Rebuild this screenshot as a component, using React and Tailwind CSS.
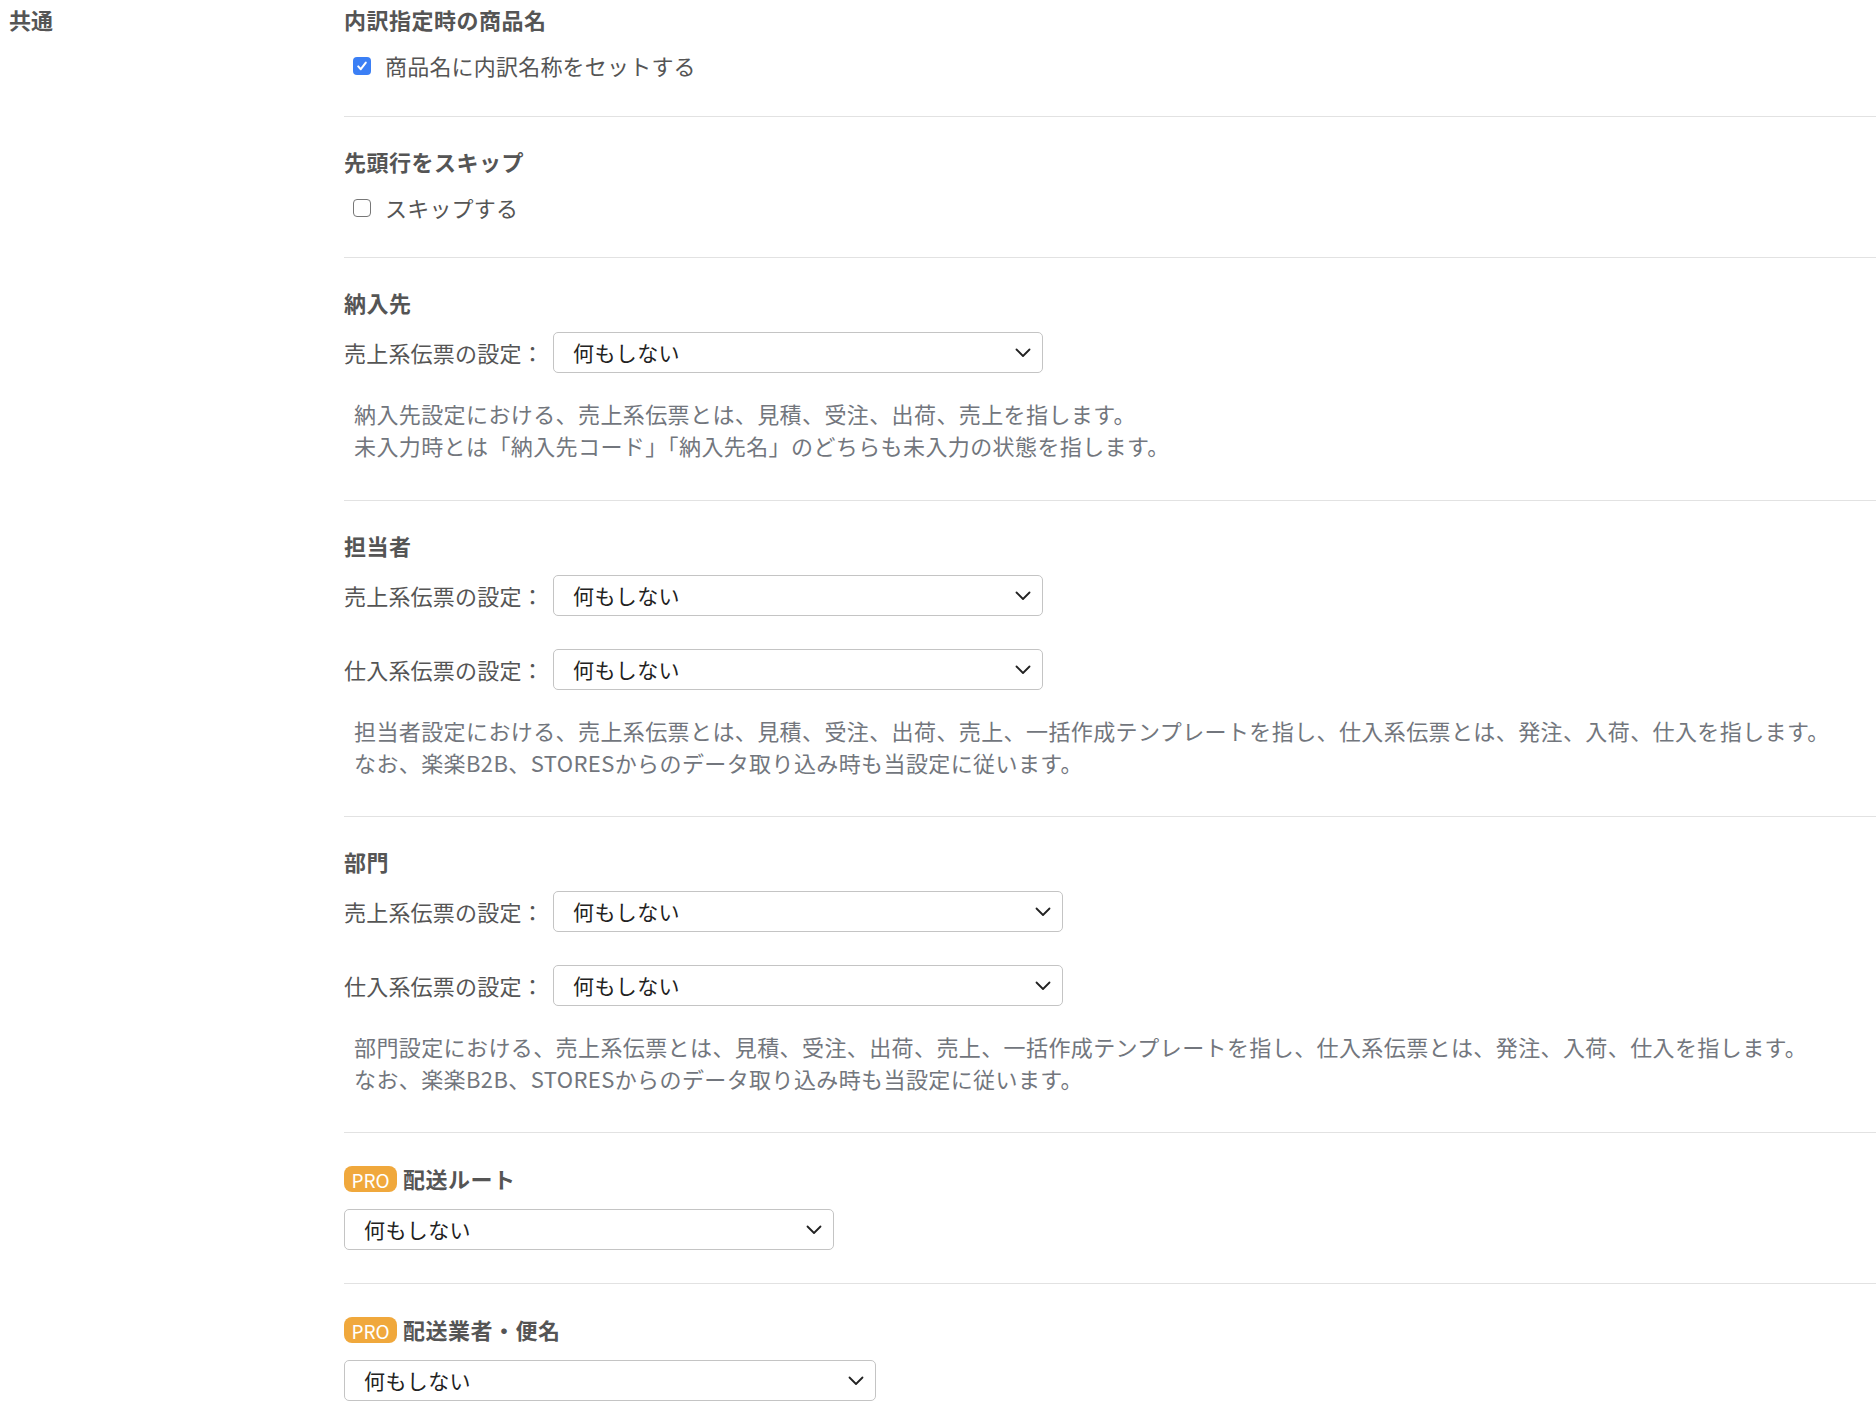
import React from "react";

const FONT = { fontFamily: '"Noto Sans CJK JP", "Noto Sans", sans-serif' };

function Chevron() {
  return (
    <svg width="16" height="10" viewBox="0 0 16 10" fill="none" className="shrink-0">
      <path d="M1.5 1.5 L8 8 L14.5 1.5" stroke="#222" strokeWidth="1.8" strokeLinecap="round" strokeLinejoin="round" />
    </svg>
  );
}

function Select({ w }) {
  return (
    <div
      className={`h-[41px] ${w} flex items-center justify-between pl-[19px] pr-[11px] border border-[#c4c4c4] rounded-[5px] bg-white text-[21px] text-[#222]`}
    >
      <span className="leading-none tracking-[0.4px]">何もしない</span>
      <Chevron />
    </div>
  );
}

function LabeledSelect({ label, w }) {
  return (
    <div className="flex items-center">
      <span className="w-[209px] text-[22px] leading-[33px] text-[#555] tracking-[0.2px]">{label}：</span>
      <Select w={w} />
    </div>
  );
}

function Title({ children, pro }) {
  return (
    <div className={`flex items-center ${pro ? "h-[35px]" : "h-[33px]"} mb-[13px]`}>
      {pro && (
        <span className="mr-[6px] h-[26px] w-[53px] flex items-center justify-center rounded-[8px] bg-[#f0a83c] text-white text-[19px] leading-none pt-[1px]">
          PRO
        </span>
      )}
      <span className="text-[22px] leading-[33px] font-bold text-[#555] tracking-[0.5px]">{children}</span>
    </div>
  );
}

function Checkbox({ checked, label }) {
  return (
    <div className="flex items-center h-[33px] pl-[9px]">
      {checked ? (
        <span className="w-[18px] h-[18px] rounded-[4px] bg-[#3b7ff5] flex items-center justify-center">
          <svg width="12" height="12" viewBox="0 0 12 12" fill="none">
            <path d="M2.2 6.4 L4.8 9.2 L9.8 2.6" stroke="white" strokeWidth="2" strokeLinecap="round" strokeLinejoin="round" />
          </svg>
        </span>
      ) : (
        <span className="w-[18px] h-[18px] rounded-[4px] border-[1.5px] border-[#777] bg-white" />
      )}
      <span className="ml-[14px] text-[22px] leading-[33px] text-[#555] tracking-[0.2px]">{label}</span>
    </div>
  );
}

function Help({ lines, extra }) {
  return (
    <div className={`mt-[24px] ${extra ? "mb-[6px]" : "mb-[5px]"} pl-[10px] text-[22px] leading-[32px] text-[#72767d] tracking-[0.4px]`}>
      {lines.map((l, i) => (
        <div key={i} className="whitespace-nowrap">{l}</div>
      ))}
    </div>
  );
}

function Section({ children, first }) {
  return (
    <div className={`${first ? "pt-[3px] pb-[34px]" : "pt-[28px] pb-[33px]"} border-b border-[#e2e2e2]`}>
      {children}
    </div>
  );
}

export default function App() {
  return (
    <div className="w-[1876px] min-h-[1424px] bg-white flex" style={FONT}>
      <div className="w-[344px] shrink-0 pl-[9px] pt-[3px]">
        <span className="text-[22px] leading-[33px] font-bold text-[#555]">共通</span>
      </div>
      <div className="flex-1">
        <Section first>
          <Title>内訳指定時の商品名</Title>
          <Checkbox checked label="商品名に内訳名称をセットする" />
        </Section>
        <Section>
          <Title>先頭行をスキップ</Title>
          <Checkbox label="スキップする" />
        </Section>
        <Section>
          <Title>納入先</Title>
          <LabeledSelect label="売上系伝票の設定" w="w-[490px]" />
          <Help
            extra
            lines={[
              "納入先設定における、売上系伝票とは、見積、受注、出荷、売上を指します。",
              "未入力時とは「納入先コード」「納入先名」のどちらも未入力の状態を指します。",
            ]}
          />
        </Section>
        <Section>
          <Title>担当者</Title>
          <div className="flex flex-col gap-[33px]">
            <LabeledSelect label="売上系伝票の設定" w="w-[490px]" />
            <LabeledSelect label="仕入系伝票の設定" w="w-[490px]" />
          </div>
          <Help
            lines={[
              "担当者設定における、売上系伝票とは、見積、受注、出荷、売上、一括作成テンプレートを指し、仕入系伝票とは、発注、入荷、仕入を指します。",
              "なお、楽楽B2B、STORESからのデータ取り込み時も当設定に従います。",
            ]}
          />
        </Section>
        <Section>
          <Title>部門</Title>
          <div className="flex flex-col gap-[33px]">
            <LabeledSelect label="売上系伝票の設定" w="w-[510px]" />
            <LabeledSelect label="仕入系伝票の設定" w="w-[510px]" />
          </div>
          <Help
            lines={[
              "部門設定における、売上系伝票とは、見積、受注、出荷、売上、一括作成テンプレートを指し、仕入系伝票とは、発注、入荷、仕入を指します。",
              "なお、楽楽B2B、STORESからのデータ取り込み時も当設定に従います。",
            ]}
          />
        </Section>
        <Section>
          <Title pro>配送ルート</Title>
          <Select w="w-[490px]" />
        </Section>
        <div className="pt-[28px] pb-[33px]">
          <Title pro>配送業者・便名</Title>
          <Select w="w-[532px]" />
        </div>
      </div>
    </div>
  );
}
